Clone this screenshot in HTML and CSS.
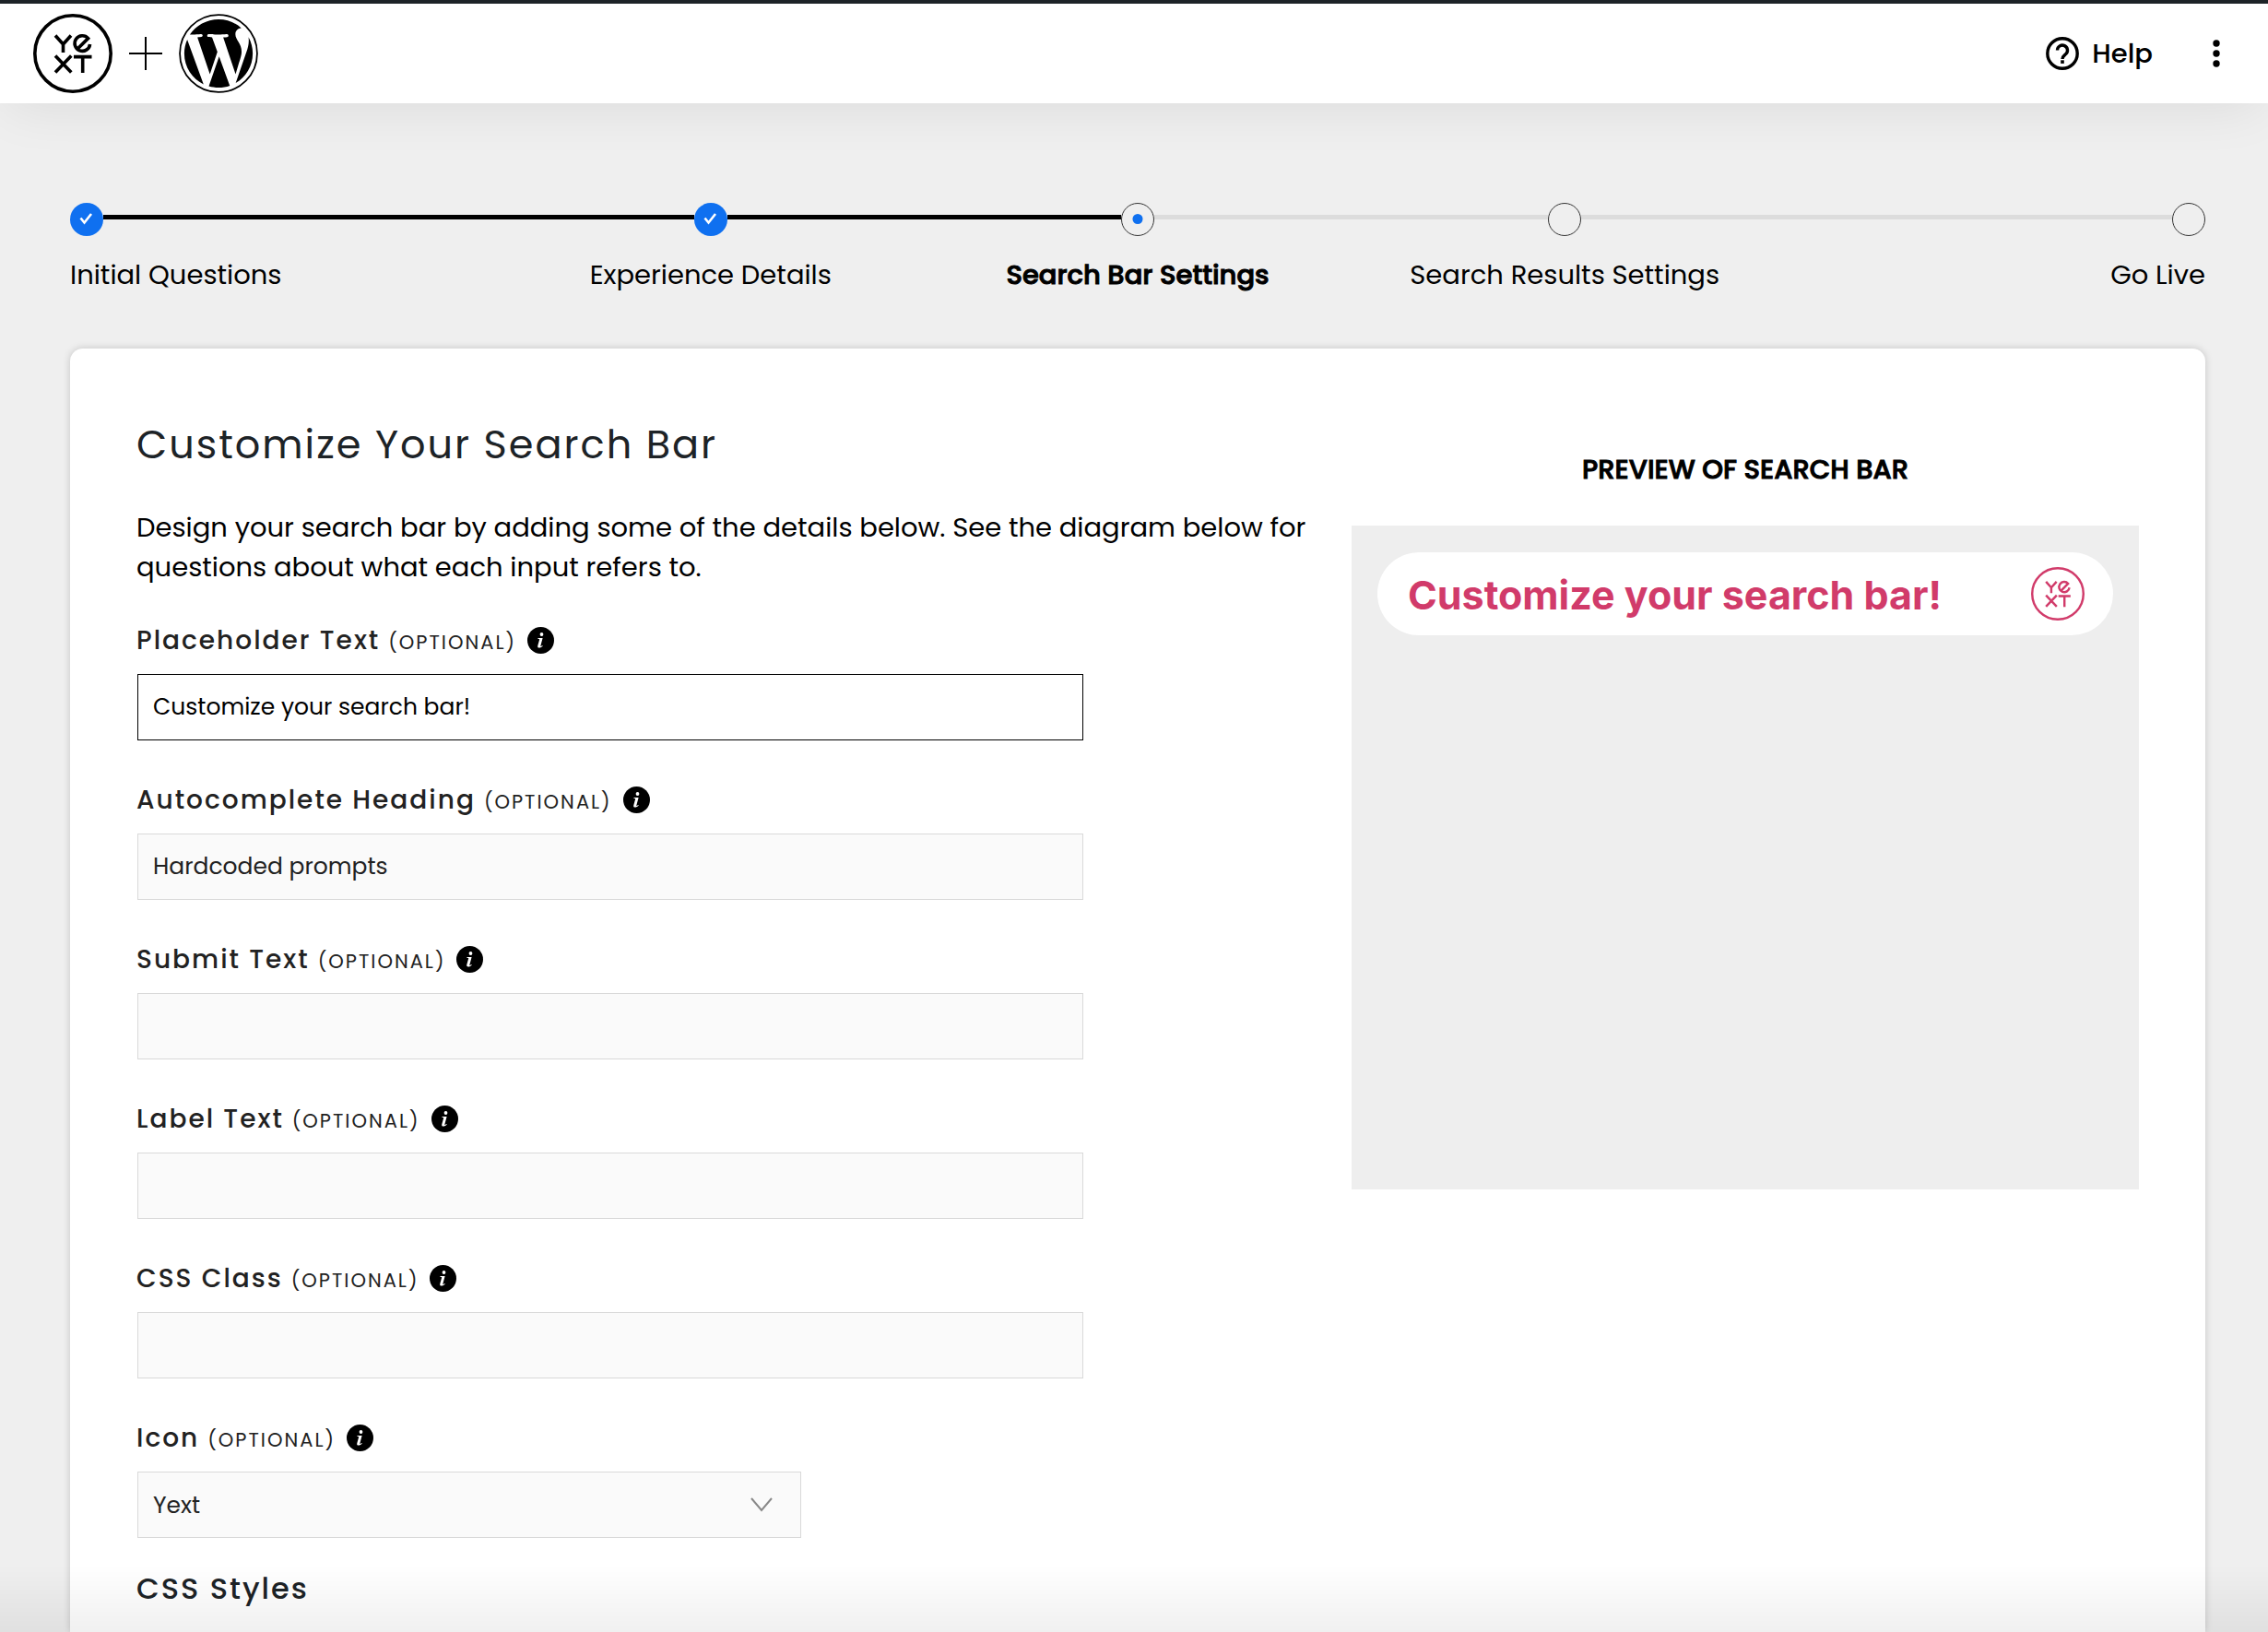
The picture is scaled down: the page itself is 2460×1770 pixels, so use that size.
FILE: index.html
```html
<!DOCTYPE html>
<html lang="en">
<head>
<meta charset="utf-8">
<meta name="viewport" content="width=device-width, initial-scale=1">
<title>Search Bar Settings</title>
<link rel="stylesheet" href="styles.css">
</head>
<body>
<svg class="sprite" aria-hidden="true">
  <symbol id="yext" viewBox="0 0 86 86">
    <g fill="none" stroke="currentColor" stroke-width="3.6">
      <circle cx="43" cy="43" r="41.2"/>
      <path d="M24 23.5 32.5 33 41 23.5M32.5 32V42M24 45.5 41.3 63.5M41.3 45.5 24 63.5M44 46.6H63.5M53.7 46.6V64"/>
      <path d="M47.6 38.6 59.6 26.6A8.3 8.3 0 1 0 61.6 33"/>
    </g>
  </symbol>
  <symbol id="info" viewBox="0 0 29 29">
    <circle cx="14.5" cy="14.5" r="14.5"/>
    <g fill="#fff"><circle cx="15.5" cy="8" r="1.9"/><path d="M11.6 12h5l-2.2 8.2c-.2.8.1 1 .7.6l1.1-.9.6.6c-1.4 1.5-2.6 2-3.9 2-1.5 0-2-.9-1.6-2.3l1.8-6.5c.1-.5 0-.7-.5-.7h-1.2z"/></g>
  </symbol>
  <symbol id="check" viewBox="0 0 36 36">
    <circle cx="18" cy="18" r="18" fill="#0f70f0"/>
    <path d="M11.5 16.5 15.5 21.5 23 12" fill="none" stroke="#fff" stroke-width="2.6"/>
  </symbol>
  <symbol id="current" viewBox="0 0 36 36">
    <circle cx="18" cy="18" r="17.5" fill="none" stroke="#333"/>
    <circle cx="18" cy="17.5" r="5.5" fill="#0f70f0"/>
  </symbol>
  <symbol id="todo" viewBox="0 0 36 36">
    <circle cx="18" cy="18" r="17.5" fill="none" stroke="#333"/>
  </symbol>
</svg>

<header class="topbar">
  <div class="brand">
    <svg class="logo" role="img" aria-label="Yext"><use href="#yext"/></svg>
    <svg class="plus" viewBox="0 0 36 36" aria-hidden="true"><path d="M0 18H36M18 0V36" stroke="#000" stroke-width="2"/></svg>
    <svg class="logo" viewBox="0 0 24 24" role="img" aria-label="WordPress">
      <circle cx="12" cy="12" r="11.7" fill="none" stroke="#000" stroke-width=".5"/>
      <path transform="translate(12 12) scale(.96) translate(-12 -12)" d="M21.469 6.825c.84 1.537 1.318 3.3 1.318 5.175 0 3.979-2.156 7.456-5.363 9.325l3.295-9.527c.615-1.54.82-2.771.82-3.864 0-.405-.026-.78-.07-1.11m-7.981.105c.647-.03 1.232-.105 1.232-.105.582-.075.514-.93-.067-.899 0 0-1.755.135-2.88.135-1.064 0-2.85-.15-2.85-.15-.585-.03-.661.855-.075.885 0 0 .54.061 1.125.09l1.68 4.605-2.37 7.08L5.354 6.9c.649-.03 1.234-.1 1.234-.1.585-.075.516-.93-.065-.896 0 0-1.746.138-2.874.138-.2 0-.438-.008-.69-.015C4.911 3.15 8.235 1.215 12 1.215c2.809 0 5.365 1.072 7.286 2.833-.046-.003-.091-.009-.141-.009-1.06 0-1.812.923-1.812 1.914 0 .89.513 1.643 1.06 2.531.411.72.89 1.643.89 2.977 0 .915-.354 1.994-.821 3.479l-1.075 3.585-3.9-11.61zM12 22.784c-1.059 0-2.081-.153-3.048-.437l3.237-9.406 3.315 9.087c.024.053.05.101.078.149-1.12.393-2.325.609-3.582.609M1.211 12c0-1.564.336-3.05.935-4.39L7.29 21.709C3.694 19.96 1.212 16.271 1.211 12"/>
    </svg>
  </div>
  <nav class="actions">
    <a class="help" href="#help">
      <svg viewBox="0 0 36 36" aria-hidden="true"><g fill="none" stroke="#000" stroke-width="3.4"><circle cx="18" cy="18" r="16.2"/><path d="M12.5 14.5a5.5 5.5 0 1 1 9 4.3c-2 1.7-3.5 2.6-3.5 5.2"/></g><path d="M16.2 25.3h3.6v3.6h-3.6z"/></svg>
      Help
    </a>
    <button class="more" type="button" aria-label="More options">
      <svg viewBox="0 0 8 30" aria-hidden="true"><circle cx="4" cy="4" r="3.7"/><circle cx="4" cy="15" r="3.7"/><circle cx="4" cy="26" r="3.7"/></svg>
    </button>
  </nav>
</header>

<main class="page">
  <ol class="steps">
    <li class="step first"><div class="track"><svg><use href="#check"/></svg><i class="done"></i></div><span>Initial Questions</span></li>
    <li class="step"><div class="track"><i class="done"></i><svg><use href="#check"/></svg><i class="done"></i></div><span>Experience Details</span></li>
    <li class="step active" aria-current="step"><div class="track"><i class="done"></i><svg><use href="#current"/></svg><i></i></div><span>Search Bar Settings</span></li>
    <li class="step"><div class="track"><i></i><svg><use href="#todo"/></svg><i></i></div><span>Search Results Settings</span></li>
    <li class="step last"><div class="track"><i></i><svg><use href="#todo"/></svg></div><span>Go Live</span></li>
  </ol>

  <section class="card">
    <form class="settings">
      <h1>Customize Your Search Bar</h1>
      <p class="intro">Design your search bar by adding some of the details below. See the diagram below for questions about what each input refers to.</p>
      <div class="field">
        <label for="placeholder">Placeholder Text <small>(OPTIONAL)</small><svg><use href="#info"/></svg></label>
        <input class="focused" id="placeholder" type="text" value="Customize your search bar!">
      </div>
      <div class="field">
        <label for="heading">Autocomplete Heading <small>(OPTIONAL)</small><svg><use href="#info"/></svg></label>
        <input id="heading" type="text" value="Hardcoded prompts">
      </div>
      <div class="field">
        <label for="submit">Submit Text <small>(OPTIONAL)</small><svg><use href="#info"/></svg></label>
        <input id="submit" type="text">
      </div>
      <div class="field">
        <label for="label">Label Text <small>(OPTIONAL)</small><svg><use href="#info"/></svg></label>
        <input id="label" type="text">
      </div>
      <div class="field">
        <label for="class">CSS Class <small>(OPTIONAL)</small><svg><use href="#info"/></svg></label>
        <input id="class" type="text">
      </div>
      <div class="field">
        <label for="icon">Icon <small>(OPTIONAL)</small><svg><use href="#info"/></svg></label>
        <select id="icon"><option>Yext</option></select>
      </div>
      <h2>CSS Styles</h2>
    </form>

    <aside class="preview">
      <h2>PREVIEW OF SEARCH BAR</h2>
      <div class="stage">
        <div class="searchbar">
          <span>Customize your search bar!</span>
          <svg role="img" aria-label="Yext"><use href="#yext"/></svg>
        </div>
      </div>
    </aside>
  </section>
</main>
<div class="fade"></div>
</body>
</html>
```
FILE: styles.css
```css
* { box-sizing: border-box; }

body {
  margin: 0;
  min-height: 100vh;
  display: flex;
  flex-direction: column;
  background: #efefef;
  color: #000;
  font: 29px/43px Poppins, Inter, "Liberation Sans", sans-serif;
}

svg { display: block; flex: none; }
.sprite { position: absolute; width: 0; height: 0; }

.topbar {
  display: flex;
  align-items: center;
  justify-content: space-between;
  height: 112px;
  padding: 0 52px 0 36px;
  border-top: 4px solid #1d2327;
  background: #fff;
  box-shadow: 0 10px 60px -8px rgba(0, 0, 0, .09);
}
.brand { display: flex; align-items: center; gap: 18px; }
.logo { width: 86px; height: 86px; }
.plus { width: 36px; height: 36px; }
.actions { display: flex; align-items: center; gap: 65px; }
.help {
  display: flex;
  align-items: center;
  gap: 14px;
  color: inherit;
  font-weight: 500;
  text-decoration: none;
}
.help svg { width: 36px; height: 36px; }
.more { padding: 0; border: 0; background: none; }
.more svg { width: 8px; height: 30px; }

.page {
  flex: 1;
  display: flex;
  flex-direction: column;
  padding: 108px 68px 0 76px;
}

.steps {
  display: grid;
  grid-template-columns: repeat(5, 1fr);
  margin: 0 0 58px;
  padding: 0;
  list-style: none;
  text-align: center;
}
.track { display: flex; align-items: center; margin-bottom: 21px; }
.track svg { width: 36px; height: 36px; }
.track i { flex: 1; height: 5px; margin-bottom: 5px; background: #dcdcdc; }
.track .done { background: #000; }
.first { text-align: left; }
.last { text-align: right; }
.active span { font-weight: 500; -webkit-text-stroke: 1px #000; }

.card {
  flex: 1;
  display: flex;
  align-items: flex-start;
  justify-content: space-between;
  gap: 28px;
  padding: 74px 72px 0;
  border-radius: 14px 14px 0 0;
  background: #fff;
  box-shadow: 0 0 8px rgba(0, 0, 0, .18);
}

.settings { flex: 1; }
h1, h2, p { margin: 0; }
h1 {
  margin-bottom: 39px;
  color: #1d2327;
  font-size: 43px;
  font-weight: 400;
  line-height: 60px;
  letter-spacing: 2px;
}
.intro { margin-bottom: 36px; }
.field { margin-bottom: 43px; }
.field:last-of-type { margin-bottom: 30px; }
label {
  display: flex;
  align-items: baseline;
  gap: 9px;
  height: 42px;
  margin-bottom: 16px;
  color: #222;
  font-size: 28px;
  font-weight: 500;
  letter-spacing: 2px;
}
label small { font-size: 21px; font-weight: 400; }
label svg { align-self: flex-start; width: 29px; height: 29px; margin: 7px 0 0 3px; color: #000; }
input, select {
  display: block;
  width: 1026px;
  max-width: 100%;
  height: 72px;
  margin-left: 1px;
  padding: 0 16px;
  border: 1px solid #d9d9d9;
  border-radius: 0;
  background: #fafafa;
  color: #222;
  font: inherit;
  font-size: 25px;
}
.focused { border-color: #000; background: #fff; color: #000; }
select {
  width: 720px;
  appearance: none;
  background: #fafafa url("data:image/svg+xml,%3Csvg xmlns='http://www.w3.org/2000/svg' width='24' height='16'%3E%3Cpath d='M1 1 12 14 23 1' fill='none' stroke='%23888' stroke-width='2'/%3E%3C/svg%3E") no-repeat right 30px center;
}
.settings h2 {
  color: #1d2327;
  font-size: 32px;
  font-weight: 500;
  line-height: 50px;
  letter-spacing: 2px;
}

.preview { width: 854px; padding-top: 36px; }
.preview h2 {
  margin-bottom: 39px;
  font-size: 29px;
  font-weight: 500;
  line-height: 43px;
  text-align: center;
  -webkit-text-stroke: 1px #000;
}
.stage { height: 720px; padding: 29px 28px; background: #eee; }
.searchbar {
  display: flex;
  align-items: center;
  justify-content: space-between;
  height: 90px;
  padding: 2px 31px 0 33px;
  border-radius: 45px;
  background: #fff;
  color: #d13b6a;
  font: 700 43px/52px Inter, sans-serif;
}
.searchbar svg { width: 58px; height: 58px; margin-bottom: 2px; }

.fade {
  position: fixed;
  right: 0;
  bottom: 0;
  left: 0;
  height: 72px;
  background: linear-gradient(transparent, rgba(0, 0, 0, .06));
  pointer-events: none;
}
```
